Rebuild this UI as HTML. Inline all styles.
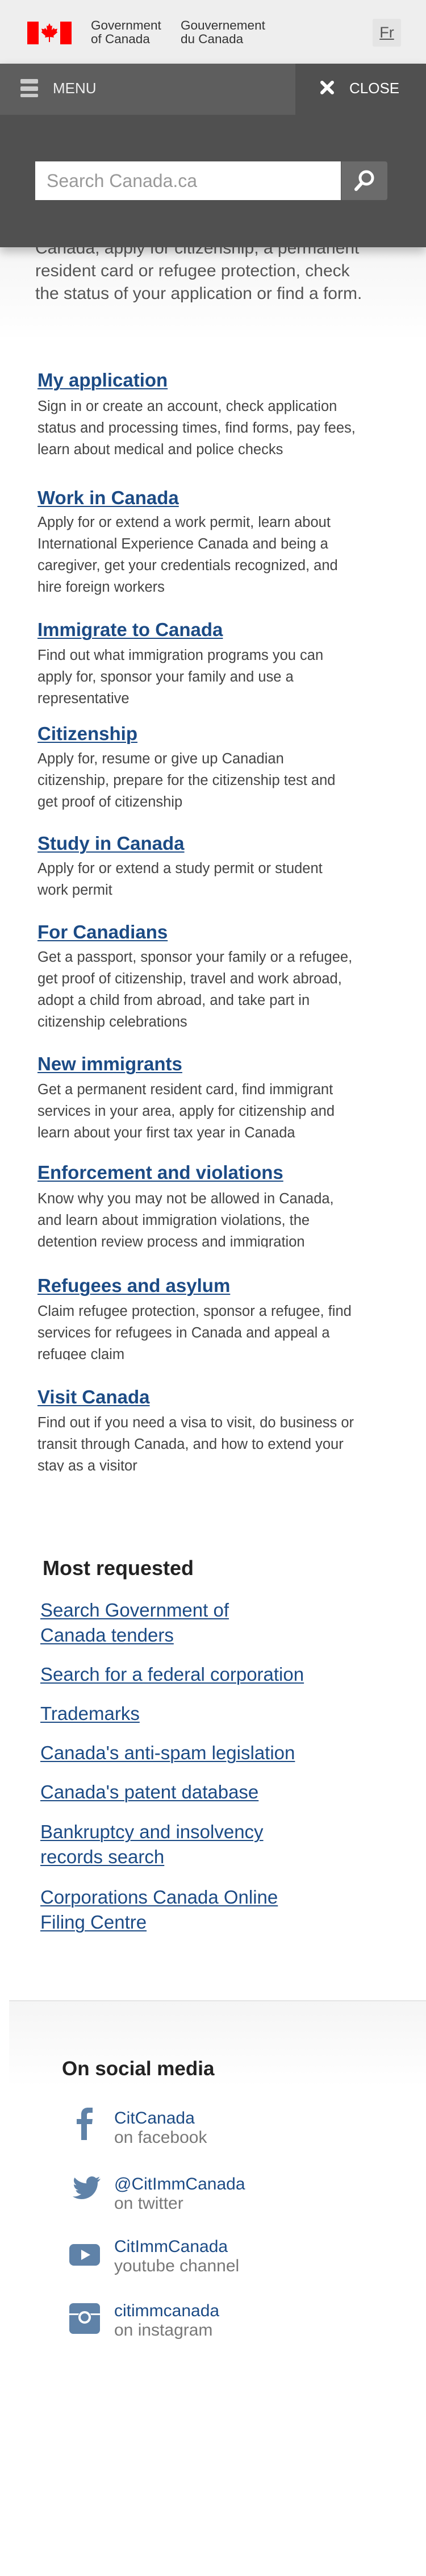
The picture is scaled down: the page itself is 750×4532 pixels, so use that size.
<!DOCTYPE html>
<html><head><meta charset="utf-8">
<style>
*{margin:0;padding:0;box-sizing:border-box}
html,body{width:750px;height:4532px;background:#fff;overflow:hidden}
body{position:relative;font-family:"Liberation Sans",sans-serif}
.a{position:absolute;white-space:nowrap}
.hd{font-weight:bold;font-size:33px;line-height:40px;color:#1c4b85;text-decoration:underline;text-decoration-thickness:2px;text-underline-offset:3px}
.bd{font-size:25.5px;line-height:38px;color:#444;overflow:hidden}
.ml{font-size:33px;line-height:44px;color:#1c4b85;text-decoration:underline;text-decoration-thickness:2px;text-underline-offset:3px}
.s1{font-size:30px;line-height:34px;color:#1c4b85}
.s2{font-size:30px;line-height:34px;color:#777}
</style></head><body>

<!-- header -->
<div class="a" style="left:0;top:0;width:750px;height:112px;background:#eeeeee"></div>
<div class="a" style="left:48px;top:38px;width:20px;height:40px;background:#f00"></div>
<div class="a" style="left:106px;top:38px;width:20px;height:40px;background:#f00"></div>
<svg class="a" style="left:68px;top:38px" width="38" height="40" viewBox="0 0 38 40">
<path fill="#f00" d="M19 3 L21.5 8 L24 7 L23 15 L27 11 L28 13.5 L33 12.5 L31.5 17.5 L33.5 18.5 L26 25 L27 28 L20 27 L20 36 L18 36 L18 27 L11 28 L12 25 L4.5 18.5 L6.5 17.5 L5 12.5 L10 13.5 L11 11 L15 15 L14 7 L16.5 8 Z"/>
</svg>
<div class="a" style="left:160px;top:33px;font-size:22.5px;line-height:24px;color:#333">Government<br>of Canada</div>
<div class="a" style="left:318px;top:33px;font-size:22.5px;line-height:24px;color:#333">Gouvernement<br>du Canada</div>
<div class="a" style="left:656px;top:33px;width:50px;height:49px;background:#e4e4e4;border-radius:3px;text-align:center;font-size:27px;line-height:49px;color:#555;text-decoration:underline">Fr</div>

<!-- menu bar -->
<div class="a" style="left:0;top:112px;width:750px;height:323px;background:#505050;box-shadow:0 8px 16px rgba(0,0,0,.25);z-index:5"></div>
<div class="a" style="left:0;top:112px;width:520px;height:90px;background:#5e5e5e;z-index:6"></div>
<div class="a" style="left:36px;top:139px;width:31px;height:8px;background:#ccc;border-radius:2px;z-index:7"></div>
<div class="a" style="left:36px;top:152px;width:31px;height:8px;background:#ccc;border-radius:2px;z-index:7"></div>
<div class="a" style="left:36px;top:165px;width:31px;height:6px;background:#ccc;border-radius:2px;z-index:7"></div>
<div class="a" style="left:93px;top:138px;font-size:26px;line-height:34px;color:#eee;z-index:7">MENU</div>
<svg class="a" style="left:563px;top:141px;z-index:7" width="26" height="26" viewBox="0 0 26 26"><path d="M4 4 L22 22 M22 4 L4 22" stroke="#fff" stroke-width="6" stroke-linecap="round"/></svg>
<div class="a" style="left:615px;top:138px;font-size:26px;line-height:34px;color:#fff;z-index:7">CLOSE</div>
<div class="a" style="left:62px;top:284px;width:538px;height:68px;background:#fff;z-index:7"></div>
<div class="a" style="left:82px;top:284px;font-size:32px;line-height:68px;color:#999;z-index:8">Search Canada.ca</div>
<div class="a" style="left:601px;top:284px;width:81px;height:68px;background:#6b6b6b;border-radius:0 4px 4px 0;z-index:7"></div>
<svg class="a" style="left:621px;top:297px;z-index:8" width="40" height="42" viewBox="0 0 40 42"><circle cx="24" cy="16" r="11" fill="none" stroke="#fff" stroke-width="5"/><path d="M16 25 L6 36" stroke="#fff" stroke-width="6" stroke-linecap="round"/></svg>

<!-- intro -->
<div class="a" style="left:0;top:380px;width:750px;height:220px;background:linear-gradient(#f2f2f2,#fff)"></div>
<div class="a" style="left:62px;top:417px;font-size:30px;line-height:40px;color:#555">Canada, apply for citizenship, a permanent<br>resident card or refugee protection, check<br>the status of your application or find a form.</div>

<!-- topics -->
<div class="a hd" style="left:66px;top:649px">My application</div>
<div class="a bd" style="left:66px;top:696px">Sign in or create an account, check application<br>status and processing times, find forms, pay fees,<br>learn about medical and police checks</div>

<div class="a hd" style="left:66px;top:856px">Work in Canada</div>
<div class="a bd" style="left:66px;top:900px">Apply for or extend a work permit, learn about<br>International Experience Canada and being a<br>caregiver, get your credentials recognized, and<br>hire foreign workers</div>

<div class="a hd" style="left:66px;top:1088px">Immigrate to Canada</div>
<div class="a bd" style="left:66px;top:1134px">Find out what immigration programs you can<br>apply for, sponsor your family and use a<br>representative</div>

<div class="a hd" style="left:66px;top:1271px">Citizenship</div>
<div class="a bd" style="left:66px;top:1316px">Apply for, resume or give up Canadian<br>citizenship, prepare for the citizenship test and<br>get proof of citizenship</div>

<div class="a hd" style="left:66px;top:1464px">Study in Canada</div>
<div class="a bd" style="left:66px;top:1509px">Apply for or extend a study permit or student<br>work permit</div>

<div class="a hd" style="left:66px;top:1620px">For Canadians</div>
<div class="a bd" style="left:66px;top:1665px">Get a passport, sponsor your family or a refugee,<br>get proof of citizenship, travel and work abroad,<br>adopt a child from abroad, and take part in<br>citizenship celebrations</div>

<div class="a hd" style="left:66px;top:1852px">New immigrants</div>
<div class="a bd" style="left:66px;top:1898px">Get a permanent resident card, find immigrant<br>services in your area, apply for citizenship and<br>learn about your first tax year in Canada</div>

<div class="a hd" style="left:66px;top:2043px">Enforcement and violations</div>
<div class="a bd" style="left:66px;top:2090px;height:105px">Know why you may not be allowed in Canada,<br>and learn about immigration violations, the<br>detention review process and immigration</div>

<div class="a hd" style="left:66px;top:2242px">Refugees and asylum</div>
<div class="a bd" style="left:66px;top:2288px;height:105px">Claim refugee protection, sponsor a refugee, find<br>services for refugees in Canada and appeal a<br>refugee claim</div>

<div class="a hd" style="left:66px;top:2438px">Visit Canada</div>
<div class="a bd" style="left:66px;top:2484px;height:105px">Find out if you need a visa to visit, do business or<br>transit through Canada, and how to extend your<br>stay as a visitor</div>

<!-- most requested -->
<div class="a" style="left:75px;top:2738px;font-weight:bold;font-size:36px;line-height:42px;color:#222">Most requested</div>
<div class="a ml" style="left:71px;top:2811px">Search Government of<br>Canada tenders</div>
<div class="a ml" style="left:71px;top:2924px">Search for a federal corporation</div>
<div class="a ml" style="left:71px;top:2993px">Trademarks</div>
<div class="a ml" style="left:71px;top:3062px">Canada's anti-spam legislation</div>
<div class="a ml" style="left:71px;top:3131px">Canada's patent database</div>
<div class="a ml" style="left:71px;top:3201px">Bankruptcy and insolvency<br>records search</div>
<div class="a ml" style="left:71px;top:3316px">Corporations Canada Online<br>Filing Centre</div>

<!-- footer -->
<div class="a" style="left:16px;top:3519px;width:734px;height:2px;background:#e4e4e4"></div>
<div class="a" style="left:16px;top:3521px;width:734px;height:150px;background:linear-gradient(#f5f5f5,#fff)"></div>
<div class="a" style="left:109px;top:3619px;font-weight:bold;font-size:35px;line-height:42px;color:#222">On social media</div>

<svg class="a" style="left:130px;top:3707px" width="40" height="58" viewBox="0 0 40 58"><path fill="#5f82a8" d="M13 58 V30 H5 V21 H13 V13 C13 5 18 1 25 1 H33 V10 H27 C24 10 23 11.5 23 14 V21 H33 L32 30 H23 V58 Z"/></svg>
<div class="a s1" style="left:201px;top:3710px">CitCanada</div>
<div class="a s2" style="left:201px;top:3744px">on facebook</div>

<svg class="a" style="left:122px;top:3828px" width="56" height="46" viewBox="0 0 56 46"><path fill="#5f82a8" d="M55 5 C53 6 51 6.5 49 7 C51 5.5 52.5 3.5 53 1.5 C51 2.5 49 3.5 47 4 C45 2 42.5 1 40 1 C34.5 1 30 5.5 30 11 C30 12 30 12.5 30.3 13.3 C22 13 14.5 9 9.5 3 C8.5 4.5 8 6.3 8 8 C8 11.5 10 14.5 12.5 16.3 C11 16.3 9.5 15.8 8 15 C8 20 11.5 24 16 25 C15 25.3 14 25.4 13.3 25.4 C12.7 25.4 12 25.3 11.4 25.2 C12.7 29 16.5 32 21 32 C17.5 34.8 13 36.4 8.3 36.4 C7.4 36.4 6.6 36.4 5.8 36.3 C10.3 39.2 15.6 41 21.3 41 C40 41 50 25.5 50 12.2 L50 10.9 C52 9.4 53.7 7.6 55 5 Z"/></svg>
<div class="a s1" style="left:201px;top:3826px">@CitImmCanada</div>
<div class="a s2" style="left:201px;top:3860px">on twitter</div>

<svg class="a" style="left:122px;top:3948px" width="54" height="38" viewBox="0 0 54 38"><rect x="0" y="0" width="54" height="38" rx="8" fill="#5f82a8"/><path d="M21 10 L37 19 L21 28 Z" fill="#fff"/></svg>
<div class="a s1" style="left:201px;top:3936px">CitImmCanada</div>
<div class="a s2" style="left:201px;top:3970px">youtube channel</div>

<svg class="a" style="left:122px;top:4052px" width="54" height="54" viewBox="0 0 54 54"><rect x="0" y="0" width="54" height="54" rx="7" fill="#5f82a8"/><rect x="0" y="18" width="54" height="3" fill="#fff"/><circle cx="27" cy="25" r="12" fill="#5f82a8"/><circle cx="27" cy="25" r="9" fill="none" stroke="#fff" stroke-width="4"/></svg>
<div class="a s1" style="left:201px;top:4049px">citimmcanada</div>
<div class="a s2" style="left:201px;top:4083px">on instagram</div>

</body></html>
